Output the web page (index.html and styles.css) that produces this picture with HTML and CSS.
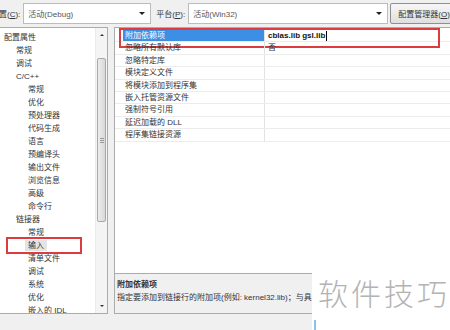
FILE: index.html
```html
<!DOCTYPE html>
<html lang="zh-CN">

<head>
    <meta charset="UTF-8">
    <meta name="viewport" content="width=device-width, initial-scale=1.0">
    <title>属性页</title>
    <link rel="stylesheet" href="styles.css">
</head>

<body>
    <div class="toolbar">
        <span class="toolbar-label cut">配置(<u>C</u>):</span>
        <div class="combo combo-config"><span>活动(Debug)</span><i class="arrow"></i></div>
        <span class="toolbar-label">平台(<u>P</u>):</span>
        <div class="combo combo-platform"><span>活动(Win32)</span><i class="arrow"></i></div>
        <button class="btn" type="button">配置管理器(<u>O</u>)</button>
    </div>

    <div class="main">
        <section class="tree">
            <ul class="tree-list">
                <li class="l0">配置属性</li>
                <li class="l1">常规</li>
                <li class="l1">调试</li>
                <li class="l1">C/C++</li>
                <li class="l2">常规</li>
                <li class="l2">优化</li>
                <li class="l2">预处理器</li>
                <li class="l2">代码生成</li>
                <li class="l2">语言</li>
                <li class="l2">预编译头</li>
                <li class="l2">输出文件</li>
                <li class="l2">浏览信息</li>
                <li class="l2">高级</li>
                <li class="l2">命令行</li>
                <li class="l1">链接器</li>
                <li class="l2">常规</li>
                <li class="l2 current"><span class="current-text">输入</span><span class="mark mark-tree"></span></li>
                <li class="l2">清单文件</li>
                <li class="l2">调试</li>
                <li class="l2">系统</li>
                <li class="l2">优化</li>
                <li class="l2">嵌入的 IDL</li>
            </ul>
            <div class="scrollbar">
                <div class="sb-btn"><i class="sb-up"></i></div>
                <div class="sb-track">
                    <div class="sb-thumb"><i class="grip"></i></div>
                </div>
                <div class="sb-btn"><i class="sb-down"></i></div>
            </div>
        </section>

        <section class="right">
            <div class="grid">
                <div class="prop-row sel">
                    <div class="gutter"></div>
                    <div class="prop-name">附加依赖项</div>
                    <div class="prop-value"><b>cblas.lib gsl.lib</b><span class="caret"></span></div>
                    <span class="mark mark-grid"></span>
                </div>
                <div class="prop-row">
                    <div class="gutter"></div>
                    <div class="prop-name">忽略所有默认库</div>
                    <div class="prop-value">否</div>
                </div>
                <div class="prop-row">
                    <div class="gutter"></div>
                    <div class="prop-name">忽略特定库</div>
                    <div class="prop-value"></div>
                </div>
                <div class="prop-row">
                    <div class="gutter"></div>
                    <div class="prop-name">模块定义文件</div>
                    <div class="prop-value"></div>
                </div>
                <div class="prop-row">
                    <div class="gutter"></div>
                    <div class="prop-name">将模块添加到程序集</div>
                    <div class="prop-value"></div>
                </div>
                <div class="prop-row">
                    <div class="gutter"></div>
                    <div class="prop-name">嵌入托管资源文件</div>
                    <div class="prop-value"></div>
                </div>
                <div class="prop-row">
                    <div class="gutter"></div>
                    <div class="prop-name">强制符号引用</div>
                    <div class="prop-value"></div>
                </div>
                <div class="prop-row">
                    <div class="gutter"></div>
                    <div class="prop-name">延迟加载的 DLL</div>
                    <div class="prop-value"></div>
                </div>
                <div class="prop-row">
                    <div class="gutter"></div>
                    <div class="prop-name">程序集链接资源</div>
                    <div class="prop-value"></div>
                </div>
            </div>
            <div class="desc">
                <div class="desc-title">附加依赖项</div>
                <div class="desc-text">指定要添加到链接行的附加项(例如: kernel32.lib)；与具</div>
            </div>
        </section>
    </div>

    <div class="watermark"><span class="edge"></span>软件技巧</div>
</body>

</html>
```

FILE: styles.css
```css
* {
    box-sizing: border-box;
}

html,
body {
    margin: 0;
}

body {
    position: relative;
    width: 450px;
    height: 330px;
    overflow: hidden;
    background-color: #f0f0f0;
    font-family: "Liberation Sans", "Noto Sans CJK SC", sans-serif;
    font-size: 8px;
    color: #333;
}

/* top bar */
.toolbar {
    display: flex;
    align-items: center;
    height: 27px;
    padding-bottom: 1px;
    white-space: nowrap;
}

.toolbar-label.cut {
    margin-left: -9px;
}

.combo {
    display: flex;
    align-items: center;
    justify-content: space-between;
    flex-shrink: 0;
    height: 21px;
    margin-left: 3px;
    padding: 0 5px 0 4px;
    background-color: #fff;
    border: 1px solid #bcbcbc;
    color: #555;
}

.combo-config {
    width: 128px;
    margin-right: 5px;
}

.combo-platform {
    width: 200px;
}

.arrow {
    border-left: 3px solid transparent;
    border-right: 3px solid transparent;
    border-top: 3px solid #222;
}

.btn {
    flex-shrink: 0;
    height: 21px;
    margin-left: 2px;
    padding: 0 7px;
    border: 1px solid #8e8f8f;
    border-radius: 2px;
    background: linear-gradient(#f7f7f7, #dedede);
    font: inherit;
    color: #333;
}

/* panels */
.main {
    display: flex;
    gap: 6px;
    height: 287px;
}

.tree {
    display: flex;
    flex-shrink: 0;
    width: 108px;
    background-color: #fff;
    border: 1px solid #ababab;
    border-left: none;
}

.tree-list {
    flex: 1;
    list-style: none;
    margin: 0;
    padding: 3px 0 0;
    overflow: hidden;
}

.tree-list li {
    position: relative;
    height: 13px;
    line-height: 13px;
    white-space: nowrap;
}

.l0 {
    padding-left: 4px;
}

.l1 {
    padding-left: 16px;
}

.l2 {
    padding-left: 28px;
}

.current-text {
    margin-left: -3px;
    padding: 1px 3px;
    background-color: #e4e4e4;
}

.mark {
    position: absolute;
    border: 2px solid #dc3c40;
}

.mark-tree {
    left: 6px;
    top: -2px;
    width: 76px;
    height: 17px;
}

.scrollbar {
    display: flex;
    flex-direction: column;
    width: 12px;
    background-color: #f4f4f4;
    border-left: 1px solid #eaeaea;
}

.sb-btn {
    display: flex;
    align-items: center;
    justify-content: center;
    height: 14px;
}

.sb-up {
    border-left: 2px solid transparent;
    border-right: 2px solid transparent;
    border-bottom: 2px solid #333;
}

.sb-down {
    border-left: 2px solid transparent;
    border-right: 2px solid transparent;
    border-top: 2px solid #333;
}

.sb-track {
    flex: 1;
    padding: 16px 1px 0;
}

.sb-thumb {
    display: flex;
    align-items: center;
    justify-content: center;
    height: 164px;
    background: linear-gradient(90deg, #ececec, #d8d8d8);
    border: 1px solid #a9a9a9;
    border-radius: 2px;
}

.grip {
    width: 4px;
    height: 5px;
    border-top: 1px solid #999;
    border-bottom: 1px solid #999;
    background: linear-gradient(#999, #999) center / 100% 1px no-repeat;
}

.right {
    flex: none;
    width: 345px;
}

.grid {
    height: 246px;
    padding-top: 2px;
    background-color: #fff;
    border: 1px solid #ababab;
    border-bottom: none;
}

.prop-row {
    position: relative;
    display: grid;
    grid-template-columns: 8px 142px 1fr;
    height: 12.4px;
    line-height: 11.4px;
    border-bottom: 1px solid #ececec;
    white-space: nowrap;
}

.prop-name {
    padding-left: 2px;
    border-right: 1px solid #e2e2e2;
}

.prop-value {
    padding-left: 3px;
}

.prop-row.sel .prop-name {
    background-color: #3d8fe6;
    color: #fff;
}

.prop-value b {
    color: #111;
}

.caret {
    display: inline-block;
    width: 1px;
    height: 10px;
    margin-left: 1px;
    vertical-align: middle;
    background-color: #000;
}

.mark-grid {
    left: 4px;
    top: -2px;
    width: 321px;
    height: 20px;
}

/* description box, cut off where the watermark starts */
.desc {
    width: 198px;
    height: 41px;
    overflow: hidden;
    padding: 4px 2px 0;
    background-color: #f0f0f0;
    border: 1px solid #ababab;
    border-right: none;
    line-height: 13px;
    white-space: nowrap;
}

.desc-title {
    font-weight: bold;
}

/* watermark over the corner */
.watermark {
    position: absolute;
    left: 312px;
    top: 262px;
    right: 0;
    bottom: 0;
    display: flex;
    align-items: center;
    padding: 0 0 8px 6px;
    background-color: #fff;
    font-family: "Noto Sans CJK SC", sans-serif;
    font-size: 30px;
    font-weight: 300;
    letter-spacing: 3px;
    color: #b3b3b3;
}

.edge {
    position: absolute;
    left: 2px;
    bottom: 0;
    width: 2px;
    height: 10px;
    background-color: #8fc0ea;
}
```
